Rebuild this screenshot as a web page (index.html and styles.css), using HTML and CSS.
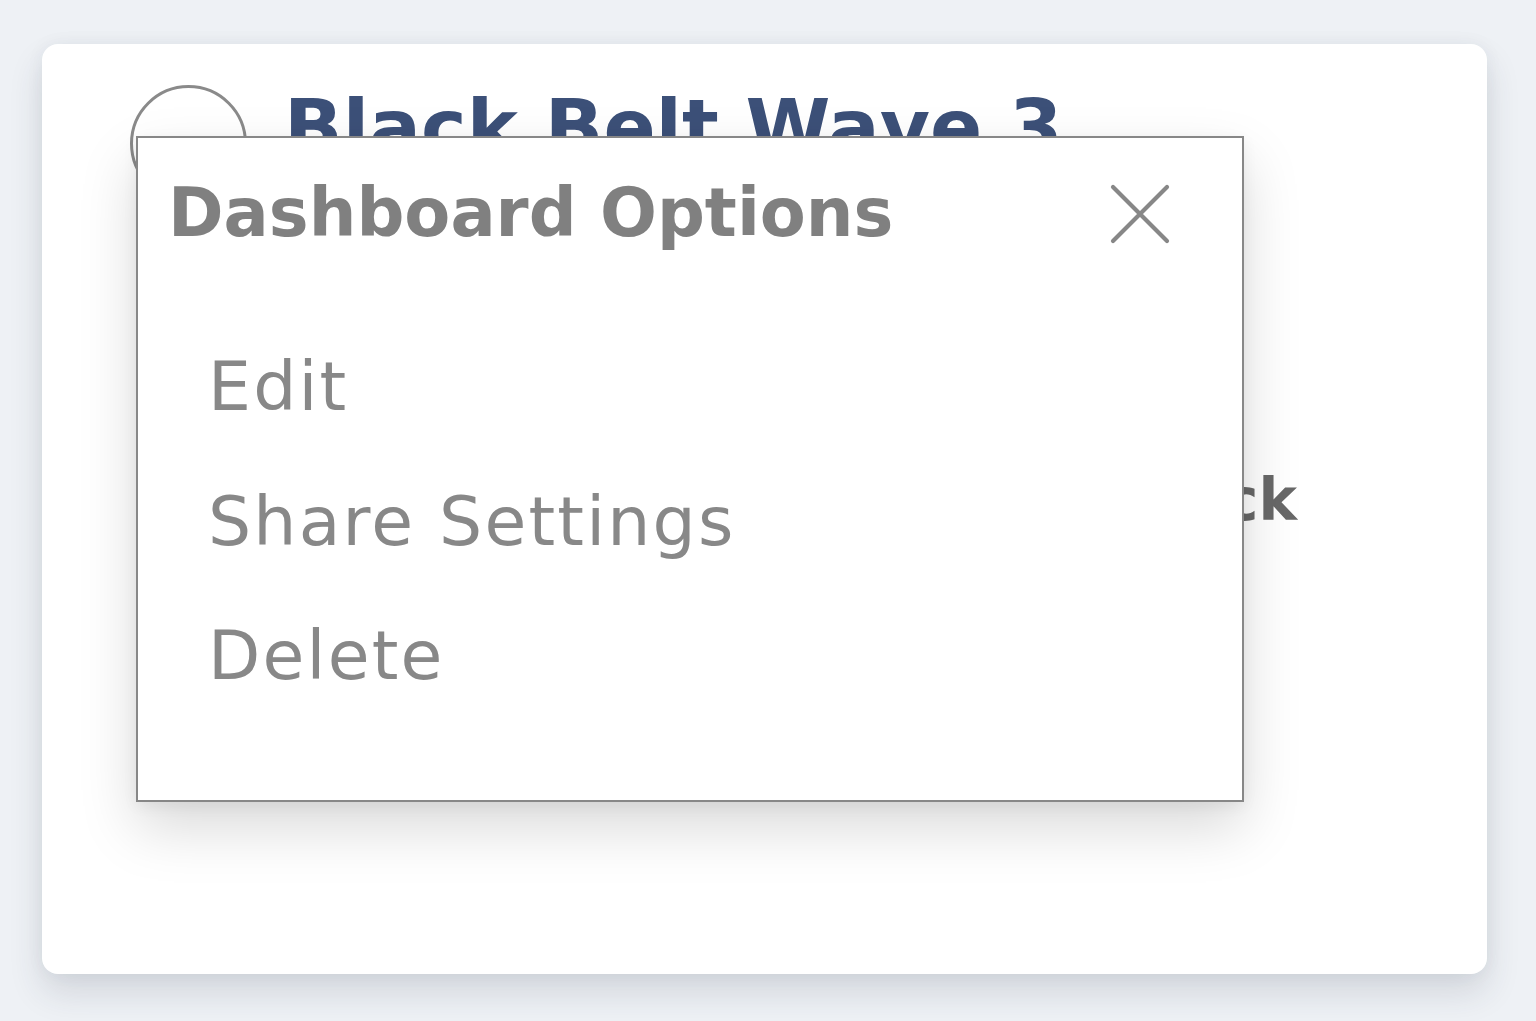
FILE: index.html
```html
<!DOCTYPE html>
<html lang="en">
<head>
<meta charset="utf-8">
<title>Dashboard Options</title>
<link rel="stylesheet" href="styles.css">
</head>
<body>
  <div class="card">
    <div class="card-head">
      <div class="avatar"></div>
      <h1 class="card-title">Black Belt Wave 3</h1>
    </div>
    <div class="card-meta">Feedback</div>

    <div class="menu">
      <div class="menu-head">
        <h2 class="menu-title">Dashboard Options</h2>
        <button class="menu-close" aria-label="Close">
          <svg viewBox="0 0 60 60" width="60" height="60">
            <path d="M3 3 L57 57 M57 3 L3 57" stroke="#878787" stroke-width="4.2" stroke-linecap="round" fill="none"/>
          </svg>
        </button>
      </div>
      <ul class="menu-list">
        <li class="menu-item">Edit</li>
        <li class="menu-item">Share Settings</li>
        <li class="menu-item">Delete</li>
      </ul>
    </div>
  </div>
</body>
</html>
```

FILE: styles.css
```css
* { box-sizing: border-box; }

html, body {
  margin: 0;
  height: 100%;
}

body {
  background: #eef1f5;
  padding: 44px 49px 0 42px;
  font-family: "DejaVu Sans", "Liberation Sans", sans-serif;
  overflow: hidden;
}

.card {
  position: relative;
  height: 930px;
  background: #ffffff;
  border-radius: 16px;
  box-shadow: 0 18px 34px rgba(40, 50, 70, 0.14), 0 0 18px rgba(40, 50, 70, 0.05);
  padding: 41px 0 0 88px;
}

.card-head {
  display: flex;
  align-items: flex-start;
}

.avatar {
  flex: none;
  width: 117px;
  height: 117px;
  border: 3px solid #8a8a8a;
  border-radius: 50%;
}

.card-title {
  margin: 0 0 0 37px;
  padding-top: 4px;
  font-size: 77px;
  font-weight: 700;
  color: #3c5078;
  line-height: 1;
  white-space: nowrap;
}

.card-meta {
  margin: 269px 190px 0 0;
  text-align: right;
  font-size: 58px;
  font-weight: 700;
  color: #686868;
  line-height: 1;
}

.menu {
  position: absolute;
  left: 94px;
  top: 92px;
  width: 1108px;
  height: 666px;
  background: #ffffff;
  border: 2px solid #878787;
  box-shadow: 0 26px 54px rgba(0, 0, 0, 0.15), 0 4px 14px rgba(0, 0, 0, 0.06);
  padding: 42px 72px 0 30px;
}

.menu-head {
  display: flex;
  align-items: center;
  justify-content: space-between;
}

.menu-title {
  margin: 0;
  font-size: 67px;
  font-weight: 700;
  color: #808080;
  line-height: 1;
  white-space: nowrap;
}

.menu-close {
  border: 0;
  background: none;
  padding: 0;
  width: 60px;
  height: 60px;
  display: block;
}

.menu-close svg { display: block; }

.menu-list {
  list-style: none;
  margin: 73px 0 0;
  padding: 0 0 0 40px;
}

.menu-item {
  font-size: 68px;
  font-weight: 400;
  color: #888888;
  letter-spacing: 2.2px;
  line-height: 134.5px;
  height: 134.5px;
  white-space: nowrap;
}
```
